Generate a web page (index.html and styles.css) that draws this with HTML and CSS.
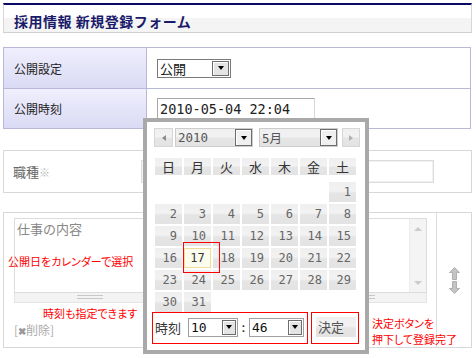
FILE: index.html
```html
<!DOCTYPE html>
<html lang="ja">
<head>
    <meta charset="UTF-8">
    <title>採用情報 新規登録フォーム</title>
    <link rel="stylesheet" href="styles.css">
</head>
<body>

<div class="page">
    <header class="title-bar">
        <h1>採用情報 新規登録フォーム</h1>
    </header>

    <div class="settings">
        <div class="label">公開設定</div>
        <div class="cell">
            <div class="select select-public"><span class="value">公開</span><span class="drop"></span></div>
        </div>
        <div class="label">公開時刻</div>
        <div class="cell">
            <div class="date-input">2010-05-04 22:04</div>
        </div>
    </div>

    <section class="field field-job">
        <span class="field-label">職種<em>※</em></span>
        <div class="job-input"></div>
    </section>

    <section class="field field-content">
        <div class="content-main">
            <div class="textarea">
                <span class="placeholder">仕事の内容</span>
                <div class="scrollbar"><span class="sb-up"></span><span class="sb-down"></span></div>
            </div>
            <div class="grip-bar"><span class="grip"></span><span class="grip grip-right"></span></div>
            <div class="delete">[<b>✖</b>削除]</div>
        </div>
        <div class="content-side">
            <svg width="11" height="13" viewBox="0 0 11 13"><polygon points="5.5,0.5 10.5,5.5 7.5,5.5 7.5,12.5 3.5,12.5 3.5,5.5 0.5,5.5" fill="#c4c4c4" stroke="#b0b0b0"/></svg>
            <svg width="11" height="13" viewBox="0 0 11 13"><polygon points="5.5,12.5 10.5,7.5 7.5,7.5 7.5,0.5 3.5,0.5 3.5,7.5 0.5,7.5" fill="#c4c4c4" stroke="#b0b0b0"/></svg>
        </div>
    </section>

    <!-- calendar popup -->
    <div class="calendar">
        <div class="cal-nav">
            <span class="nav-btn prev"></span>
            <div class="cal-select year"><span class="value">2010</span><span class="drop"></span></div>
            <div class="cal-select month"><span class="value">5月</span><span class="drop"></span></div>
            <span class="nav-btn next"></span>
        </div>
        <div class="cal-grid">
            <span class="dow">日</span><span class="dow">月</span><span class="dow">火</span><span class="dow">水</span><span class="dow">木</span><span class="dow">金</span><span class="dow">土</span>
            <span></span><span></span><span></span><span></span><span></span><span></span><span class="day">1</span>
            <span class="day">2</span><span class="day">3</span><span class="day">4</span><span class="day">5</span><span class="day">6</span><span class="day">7</span><span class="day">8</span>
            <span class="day">9</span><span class="day">10</span><span class="day">11</span><span class="day">12</span><span class="day">13</span><span class="day">14</span><span class="day">15</span>
            <span class="day">16</span><span class="day today">17</span><span class="day">18</span><span class="day">19</span><span class="day">20</span><span class="day">21</span><span class="day">22</span>
            <span class="day">23</span><span class="day">24</span><span class="day">25</span><span class="day">26</span><span class="day">27</span><span class="day">28</span><span class="day">29</span>
            <span class="day">30</span><span class="day">31</span>
        </div>
        <div class="cal-time">
            <span class="time-label">時刻</span>
            <div class="select hour"><span class="value">10</span><span class="drop"></span></div>
            <span class="colon">:</span>
            <div class="select minute"><span class="value">46</span><span class="drop"></span></div>
            <span class="decide">決定</span>
        </div>
    </div>

    <!-- annotations -->
    <span class="mark mark-today"></span>
    <span class="mark mark-time"></span>
    <span class="mark mark-decide"></span>
    <span class="note note-calendar">公開日をカレンダーで選択</span>
    <span class="note note-time">時刻も指定できます</span>
    <span class="note note-decide">決定ボタンを<br>押下して登録完了</span>
</div>

</body>
</html>
```

FILE: styles.css
```css
* {
    box-sizing: border-box;
}

body {
    margin: 0;
    background-color: #ffffff;
    font-family: "Noto Sans CJK JP", sans-serif;
    font-size: 12px;
    color: #222222;
}

.page {
    position: relative;
    width: 476px;
    height: 358px;
    padding: 3px 4px 0 3px;
    overflow: hidden;
}

/* title */

.title-bar {
    height: 30px;
    border-top: 2px solid #0a0a64;
    border-left: 1px solid #d6d6d6;
    border-right: 1px solid #d6d6d6;
    border-bottom: 1px solid #cfcfcf;
    background: linear-gradient(#ffffff 13px, #f4f4f4 13px);
}

.title-bar h1 {
    margin: 0;
    padding: 5px 0 0 10px;
    font-size: 14px;
    line-height: 22px;
    font-weight: bold;
    letter-spacing: .5px;
    color: #1a1a6a;
}

/* settings table */

.settings {
    display: grid;
    grid-template-columns: 143px 1fr;
    grid-template-rows: 41px 40px;
    width: 468px;
    margin-top: 14px;
    border-top: 1px solid #b8b8d8;
    border-left: 1px solid #b8b8d8;
}

.settings .label,
.settings .cell {
    display: flex;
    align-items: center;
    border-right: 1px solid #b8b8d8;
    border-bottom: 1px solid #b8b8d8;
}

.settings .label {
    padding-left: 10px;
    background: linear-gradient(#efeffd, #dadaf4);
    font-size: 12px;
    color: #222222;
}

.settings .cell {
    padding-left: 10px;
    background-color: #ffffff;
}

.select {
    display: flex;
    align-items: center;
    height: 19px;
    border: 1px solid #7a7a7a;
    background-color: #ffffff;
}

.select .value {
    padding-left: 2px;
    font-family: "DejaVu Sans Mono", "Noto Sans CJK JP", monospace;
    font-size: 13px;
    line-height: 17px;
    color: #111111;
}

.select-public {
    width: 74px;
}

.select-public .value {
    font-family: "Noto Sans CJK JP", sans-serif;
}

.drop {
    display: flex;
    align-items: center;
    justify-content: center;
    width: 17px;
    height: 15px;
    margin-left: auto;
    margin-right: 1px;
    border: 1px solid #6d6d6d;
    background-color: #e4e4e4;
    box-shadow: inset 1px 1px #ffffff;
}

.drop::after {
    content: "";
    border-left: 3.5px solid transparent;
    border-right: 3.5px solid transparent;
    border-top: 4px solid #000000;
}

.date-input {
    width: 158px;
    height: 22px;
    padding-left: 2px;
    border: 1px solid;
    border-color: #a8a8a8 #d8d8d8 #d8d8d8 #a8a8a8;
    font-family: "DejaVu Sans Mono", monospace;
    font-size: 13.5px;
    line-height: 20px;
    color: #222222;
}

/* form fields */

.field {
    width: 469px;
    border: 1px solid #d8d8d8;
    background-color: #ffffff;
}

.field-job {
    display: flex;
    align-items: center;
    height: 43px;
    margin-top: 21px;
    padding-left: 9px;
}

.field-label {
    width: 128px;
    flex: none;
    font-size: 13px;
    color: #666666;
}

.field-label em {
    font-style: normal;
    font-size: 11px;
    color: #bbbbbb;
}

.job-input {
    width: 293px;
    height: 23px;
    border: 1px solid #dcdcdc;
    box-shadow: inset 0 0 0 1px #f2f2f2;
}

.field-content {
    display: flex;
    height: 136px;
    margin-top: 19px;
}

.content-main {
    width: 432px;
    padding: 5px 9px 0 10px;
}

.textarea {
    display: flex;
    height: 75px;
    border: 1px solid #dcdcdc;
}

.placeholder {
    flex: 1;
    padding: 2px 2px;
    font-size: 13px;
    line-height: 16px;
    color: #888888;
}

.scrollbar {
    display: flex;
    flex-direction: column;
    justify-content: space-between;
    align-items: center;
    width: 17px;
    padding: 8px 0 7px;
    background-color: #f4f4f4;
    border-left: 1px solid #ececec;
}

.sb-up {
    border-left: 4px solid transparent;
    border-right: 4px solid transparent;
    border-bottom: 4px solid #cccccc;
}

.sb-down {
    border-left: 4px solid transparent;
    border-right: 4px solid transparent;
    border-top: 4px solid #cccccc;
}

.grip-bar {
    display: flex;
    height: 10px;
    padding: 2px 0 0 62px;
    border: 1px solid #e4e4e4;
    border-top: none;
    background-color: #f3f3f3;
}

.grip {
    width: 26px;
    height: 4px;
    border-top: 1px solid #c8c8c8;
    border-bottom: 1px solid #c8c8c8;
}

.grip-right {
    margin-left: 246px;
}

.delete {
    margin-top: 20px;
    font-size: 12px;
    line-height: 14px;
    color: #aaaaaa;
}

.delete b {
    font-size: 10px;
    color: #999999;
}

.content-side {
    flex: 1;
    display: flex;
    flex-direction: column;
    align-items: center;
    justify-content: center;
    gap: 1px;
    border-left: 1px solid #dcdcdc;
}

/* calendar popup */

.calendar {
    position: absolute;
    left: 143px;
    top: 118px;
    width: 226px;
    height: 236px;
    padding: 6px 0 0 8px;
    border: 4px solid #a9a9a9;
    background-color: #ffffff;
}

.cal-nav {
    display: flex;
    height: 19px;
    margin-left: -1px;
}

.nav-btn,
.cal-select,
.dow,
.day,
.decide {
    background: linear-gradient(#efefef 0, #f2f2f2 45%, #e5e5e5 55%, #e3e3e3 100%);
}

.nav-btn {
    display: flex;
    align-items: center;
    justify-content: center;
    width: 19px;
    border: 1px solid #d6d6d6;
}

.nav-btn.prev {
    margin-right: 2px;
}

.nav-btn.prev::after {
    content: "";
    border-top: 3.5px solid transparent;
    border-bottom: 3.5px solid transparent;
    border-right: 4px solid #8a8a8a;
}

.nav-btn.next {
    width: 18px;
}

.nav-btn.next::after {
    content: "";
    border-top: 3.5px solid transparent;
    border-bottom: 3.5px solid transparent;
    border-left: 4px solid #b0b0b0;
}

.cal-select {
    display: flex;
    align-items: center;
    border: 1px solid #cccccc;
}

.cal-select .value {
    padding-left: 2px;
    font-family: "DejaVu Sans Mono", "Noto Sans CJK JP", monospace;
    font-size: 12.5px;
    color: #555555;
}

.cal-select .drop {
    width: 17px;
    height: 17px;
    margin-right: 0;
    background-color: #f0f0f0;
}

.cal-select.year {
    width: 78px;
    margin-right: 6px;
}

.cal-select.month {
    width: 79px;
    margin-right: 4px;
}

.cal-grid {
    display: grid;
    grid-template-columns: repeat(7, 27px);
    grid-template-rows: 22px repeat(6, 20px);
    column-gap: 2px;
    row-gap: 2px;
    margin-top: 11px;
}

.dow {
    height: 17px;
    text-align: center;
    font-size: 13px;
    line-height: 17px;
    color: #333333;
}

.day {
    padding-right: 5px;
    text-align: right;
    font-family: "DejaVu Sans Mono", monospace;
    font-size: 12px;
    line-height: 20px;
    color: #666666;
}

.day.today {
    padding-right: 0;
    text-align: center;
    background: #fcfcee;
    border: 1px solid #f0dc98;
    line-height: 18px;
    color: #333333;
}

.cal-time {
    display: flex;
    align-items: center;
    height: 20px;
    margin-top: 5px;
}

.time-label {
    margin-right: 7px;
    font-size: 13px;
    color: #333333;
}

.cal-time .select {
    border-color: #a0a0a0;
}

.cal-time .drop {
    width: 14px;
}

.select.hour {
    width: 50px;
}

.colon {
    width: 11px;
    text-align: center;
    font-family: "DejaVu Sans Mono", monospace;
    font-size: 13px;
    color: #333333;
}

.select.minute {
    width: 55px;
}

.decide {
    width: 40px;
    height: 20px;
    margin-left: 12px;
    padding-left: 2px;
    font-size: 13px;
    line-height: 20px;
    color: #555555;
}

/* annotations */

.mark {
    position: absolute;
    border: 1px solid #ff0000;
}

.mark-today {
    left: 183px;
    top: 242px;
    width: 37px;
    height: 31px;
}

.mark-time {
    left: 152px;
    top: 312px;
    width: 156px;
    height: 32px;
}

.mark-decide {
    left: 311px;
    top: 312px;
    width: 48px;
    height: 32px;
}

.note {
    position: absolute;
    font-size: 11px;
    line-height: 14px;
    color: #ff0000;
    font-feature-settings: "palt";
    white-space: nowrap;
}

.note-calendar {
    left: 8px;
    top: 254px;
}

.note-time {
    left: 43px;
    top: 306px;
}

.note-decide {
    left: 372px;
    top: 315px;
    line-height: 16px;
}
```
